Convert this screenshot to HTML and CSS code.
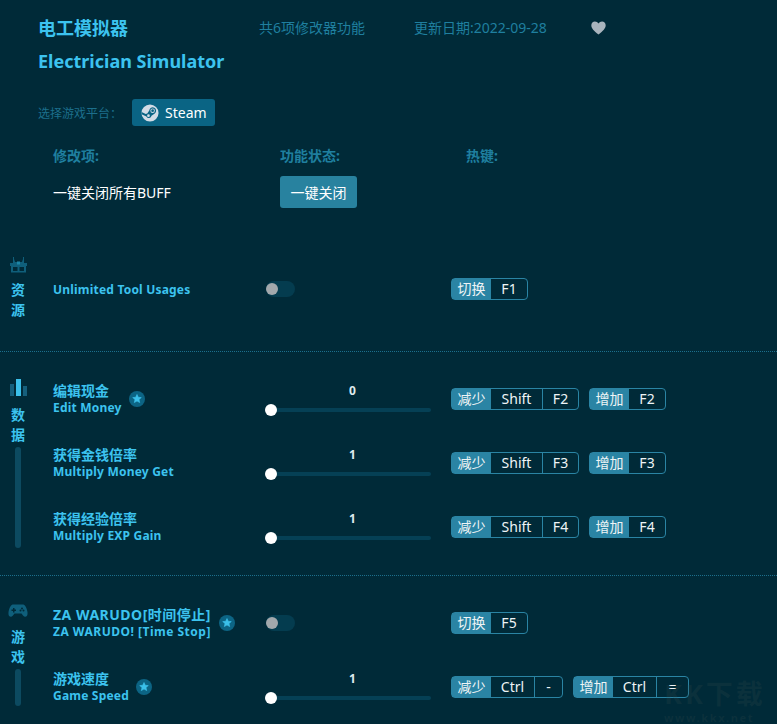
FILE: index.html
```html
<!DOCTYPE html>
<html lang="zh-CN">
<head>
<meta charset="utf-8">
<title>电工模拟器</title>
<link rel="stylesheet" href="styles.css">
</head>
<body>
<div class="page">
  <header class="header">
    <div class="title-row">
      <h1 class="title">电工模拟器</h1>
      <span class="meta meta-count">共6项修改器功能</span>
      <span class="meta meta-date">更新日期:2022-09-28</span>
      <svg class="heart" viewBox="0 0 16 15" width="15" height="14"><path d="M8 14.5C3 10.5.3 8 .3 4.6.3 2.2 2.1.5 4.2.5 5.7.5 7.2 1.3 8 2.700 8.800 1.300 10.300.5 11.800.5 13.900.5 15.700 2.200 15.700 4.600 15.700 8 13 10.500 8 14.500Z" fill="#a9b4bd"/></svg>
    </div>
    <div class="subtitle">Electrician Simulator</div>
    <div class="platform-row">
      <span class="platform-label">选择游戏平台：</span>
      <span class="steam-btn">
        <svg class="steam-icon" viewBox="0 0 20 20" width="18" height="18">
          <circle cx="10" cy="10" r="9.500" fill="#d3dce6"/>
          <path d="M.6 11.500 6 13.800A3 3 0 0 0 11.700 13L15.300 10.500A3.800 3.800 0 1 0 9.200 7.300L7 10.600A3 3 0 0 0 5.300 11L.6 9Z" fill="#0a6484"/>
          <circle cx="12.900" cy="7.400" r="2.500" fill="#d3dce6"/>
          <circle cx="12.900" cy="7.400" r="1.500" fill="#0a6484"/>
          <circle cx="8.300" cy="13" r="1.500" fill="#d3dce6"/>
        </svg>
        Steam
      </span>
    </div>
  </header>

  <div class="table-head">
    <span class="col-name">修改项:</span>
    <span class="col-state">功能状态:</span>
    <span class="col-key">热键:</span>
  </div>
  <div class="close-row">
    <span class="col-name close-text">一键关闭所有BUFF</span>
    <span class="col-state"><span class="close-btn">一键关闭</span></span>
  </div>

  <section class="section section-res">
    <aside class="side">
      <svg class="side-icon" viewBox="0 0 17 16" width="17" height="16">
        <path d="M3 0H4V2L5 5H12L13 2V0H14V6H3ZM0 6H17V9H0ZM1 9H16V15.500H1ZM3 10V14H7.500V10ZM9.500 10V14H14V10Z" fill="#0f5f7b" fill-rule="evenodd"/>
        <rect x="7" y="4.500" width="3" height="3" fill="#1c86a6"/>
      </svg>
      <div class="side-text">资<br>源</div>
    </aside>
    <div class="rows">
      <div class="row">
        <div class="name"><div class="name-en">Unlimited Tool Usages</div></div>
        <div class="control"><span class="toggle"><span class="knob"></span></span></div>
        <div class="keys">
          <span class="key"><b class="key-label">切换</b><span class="cell">F1</span></span>
        </div>
      </div>
    </div>
  </section>

  <section class="section section-data">
    <aside class="side">
      <svg class="side-icon" viewBox="0 0 17 17" width="17" height="17">
        <rect x="0" y="5" width="4" height="12" fill="#155f7c"/>
        <rect x="6" y="0" width="5" height="17" fill="#3bc0ea"/>
        <rect x="13" y="7" width="4" height="10" fill="#155f7c"/>
      </svg>
      <div class="side-text">数<br>据</div>
      <div class="side-bar bar-data"></div>
    </aside>
    <div class="rows">
      <div class="row">
        <div class="name">
          <div class="name-line">
            <div><div class="name-cn">编辑现金</div><div class="name-en">Edit Money</div></div>
            <svg class="star" viewBox="0 0 16 16" width="16" height="16"><circle cx="8" cy="8" r="8" fill="#0c6484"/><path d="M8 3.500 9.300 6.300 12.300 6.600 10 8.600 10.700 11.600 8 10 5.300 11.600 6 8.600 3.700 6.600 6.700 6.300Z" fill="#3bc0ea" stroke="#3bc0ea" stroke-linejoin="round" stroke-width=".6"/></svg>
          </div>
        </div>
        <div class="control"><div class="slider"><span class="slider-val">0</span><span class="track"><span class="thumb"></span></span></div></div>
        <div class="keys">
          <span class="key"><b class="key-label">减少</b><span class="cell cell-shift">Shift</span><span class="cell">F2</span></span>
          <span class="key"><b class="key-label">增加</b><span class="cell">F2</span></span>
        </div>
      </div>
      <div class="row">
        <div class="name"><div class="name-cn">获得金钱倍率</div><div class="name-en">Multiply Money Get</div></div>
        <div class="control"><div class="slider"><span class="slider-val">1</span><span class="track"><span class="thumb"></span></span></div></div>
        <div class="keys">
          <span class="key"><b class="key-label">减少</b><span class="cell cell-shift">Shift</span><span class="cell">F3</span></span>
          <span class="key"><b class="key-label">增加</b><span class="cell">F3</span></span>
        </div>
      </div>
      <div class="row">
        <div class="name"><div class="name-cn">获得经验倍率</div><div class="name-en">Multiply EXP Gain</div></div>
        <div class="control"><div class="slider"><span class="slider-val">1</span><span class="track"><span class="thumb"></span></span></div></div>
        <div class="keys">
          <span class="key"><b class="key-label">减少</b><span class="cell cell-shift">Shift</span><span class="cell">F4</span></span>
          <span class="key"><b class="key-label">增加</b><span class="cell">F4</span></span>
        </div>
      </div>
    </div>
  </section>

  <section class="section section-game">
    <aside class="side">
      <svg class="side-icon" viewBox="0 0 20 15" width="20" height="15">
        <path d="M5.500 1.500H14.500C17 1.500 18.500 4 19.500 9 20 12.500 18.500 14 16.800 13.800 15.500 13.600 14.500 11.500 13.500 10.500H6.500C5.500 11.500 4.500 13.600 3.200 13.800 1.500 14 0 12.500.5 9 1.500 4 3 1.500 5.500 1.500Z" fill="#0f5f7b"/>
        <path d="M5 5H6.500V6.500H8V8H6.500V9.500H5V8H3.500V6.500H5Z" fill="#002a38"/>
        <circle cx="14" cy="5.500" r="1" fill="#002a38"/><circle cx="12.500" cy="7.500" r="1" fill="#002a38"/><circle cx="15.500" cy="7.500" r="1" fill="#002a38"/>
      </svg>
      <div class="side-text">游<br>戏</div>
      <div class="side-bar bar-game"></div>
    </aside>
    <div class="rows">
      <div class="row">
        <div class="name">
          <div class="name-line">
            <div class="name-wide"><div class="name-cn">ZA WARUDO[时间停止]</div><div class="name-en">ZA WARUDO! [Time Stop]</div></div>
            <svg class="star" viewBox="0 0 16 16" width="16" height="16"><circle cx="8" cy="8" r="8" fill="#0c6484"/><path d="M8 3.500 9.300 6.300 12.300 6.600 10 8.600 10.700 11.600 8 10 5.300 11.600 6 8.600 3.700 6.600 6.700 6.300Z" fill="#3bc0ea" stroke="#3bc0ea" stroke-linejoin="round" stroke-width=".6"/></svg>
          </div>
        </div>
        <div class="control"><span class="toggle"><span class="knob"></span></span></div>
        <div class="keys">
          <span class="key"><b class="key-label">切换</b><span class="cell">F5</span></span>
        </div>
      </div>
      <div class="row">
        <div class="name">
          <div class="name-line">
            <div><div class="name-cn">游戏速度</div><div class="name-en">Game Speed</div></div>
            <svg class="star" viewBox="0 0 16 16" width="16" height="16"><circle cx="8" cy="8" r="8" fill="#0c6484"/><path d="M8 3.500 9.300 6.300 12.300 6.600 10 8.600 10.700 11.600 8 10 5.300 11.600 6 8.600 3.700 6.600 6.700 6.300Z" fill="#3bc0ea" stroke="#3bc0ea" stroke-linejoin="round" stroke-width=".6"/></svg>
          </div>
        </div>
        <div class="control"><div class="slider"><span class="slider-val">1</span><span class="track"><span class="thumb"></span></span></div></div>
        <div class="keys">
          <span class="key"><b class="key-label">减少</b><span class="cell cell-ctrl">Ctrl</span><span class="cell cell-minus">-</span></span>
          <span class="key"><b class="key-label">增加</b><span class="cell cell-ctrl">Ctrl</span><span class="cell cell-eq">=</span></span>
        </div>
      </div>
    </div>
  </section>

  <div class="watermark">
    <div class="wm-big">KK下载</div>
    <div class="wm-small">www.kkx.net</div>
  </div>
</div>
</body>
</html>
```
FILE: styles.css
```css
* { box-sizing: border-box; }
html, body { margin: 0; padding: 0; }
body {
  background: #002a38;
  font-family: "Noto Sans", "Noto Sans CJK SC", sans-serif;
  color: #fff;
  overflow: hidden;
}
.page { position: relative; width: 777px; height: 724px; overflow: hidden; }

.header { padding: 16px 0 0 38px; }
.title-row { display: flex; align-items: center; height: 24px; }
.title { margin: 0; width: 221px; font-size: 18px; font-weight: 700; color: #3cc3ef; line-height: 24px; }
.meta { font-size: 14px; color: #1f7f9f; line-height: 24px; }
.meta-count { width: 155px; }
.meta-date { width: 177px; }
.heart { display: block; }
.subtitle { margin-top: 9px; font-size: 18px; font-weight: 700; color: #3cc3ef; line-height: 24px; }
.platform-row { display: flex; align-items: center; margin-top: 26px; height: 27px; }
.platform-label { width: 94px; font-size: 12px; color: #1c6f8c; }
.steam-btn {
  display: flex; align-items: center; gap: 6px;
  width: 83px; height: 27px; padding-left: 9px;
  background: #0a6484; border-radius: 3px;
  font-size: 14px; color: #fff;
}

.table-head { display: flex; margin-top: 19px; height: 20px; align-items: center; font-size: 14px; font-weight: 700; color: #1f7f9f; }
.col-name { width: 227px; margin-left: 53px; }
.col-state { width: 185px; }
.col-key { margin-left: 1px; }
.close-row { display: flex; align-items: center; margin-top: 11px; height: 32px; }
.close-text { font-size: 14px; }
.close-btn {
  display: inline-flex; align-items: center; justify-content: center;
  width: 77px; height: 32px; background: #28829f; border-radius: 3px; font-size: 14px;
}

.section { display: flex; }
.section-res { margin-top: 21px; height: 123px; padding-top: 28px; border-bottom: 1px dotted #1c6f8c; }
.section-data { height: 224px; padding-top: 15px; border-bottom: 1px dotted #1c6f8c; }
.section-game { padding-top: 15px; }

.side { width: 53px; padding-right: 17px; flex: none; display: flex; flex-direction: column; align-items: center; }
.section-data .side { padding-top: 12px; }
.section-game .side { padding-top: 12px; }
.side-icon { display: block; flex: none; }
.side-text { margin-top: 9px; font-size: 14px; font-weight: 700; line-height: 20px; text-align: center; color: #3cc3ef; }
.section-res .side-text { margin-top: 7px; }
.side-bar { width: 6px; margin-top: 2px; background: #0c4a60; border-radius: 3px; flex: none; }
.bar-data { height: 101px; }
.bar-game { height: 37px; }

.rows { flex: 1; }
.row { display: flex; align-items: center; height: 64px; }
.name { width: 212px; flex: none; }
.name-line { display: flex; align-items: center; gap: 7px; }
.name-wide { letter-spacing: .5px; margin-right: 1px; }
.name-cn { font-size: 14px; font-weight: 700; line-height: 17px; color: #3cc3ef; }
.name-en { font-size: 12px; font-weight: 700; line-height: 17px; letter-spacing: .2px; color: #3cc3ef; }
.name-wide .name-en { letter-spacing: .5px; }
.star { display: block; flex: none; }

.control { width: 186px; flex: none; }
.toggle { display: block; width: 29px; height: 16px; margin-left: 1px; background: #043c4f; border-radius: 8px; position: relative; }
.knob { position: absolute; left: 0; top: 2px; width: 12px; height: 12px; border-radius: 50%; background: #a2a8ac; }
.slider { width: 166px; display: flex; flex-direction: column; align-items: center; }
.slider-val { font-size: 12px; font-weight: 700; line-height: 16px; margin-left: 9px; color: #dfeaee; }
.track { display: block; position: relative; width: 160px; height: 4px; margin: 9px 0 4px 6px; background: #054055; border-radius: 2px; }
.thumb { position: absolute; left: -6px; top: -4px; width: 12px; height: 12px; border-radius: 50%; background: #fff; }

.keys { display: flex; gap: 10px; }
.key { display: flex; height: 22px; border: 1px solid #2a84a4; border-radius: 4px; font-size: 14px; line-height: 20px; color: #eef4f6; }
.key-label { width: 39px; font-weight: 400; text-align: center; background: #2a84a4; }
.cell { min-width: 36px; text-align: center; }
.cell + .cell { border-left: 1px solid #2a84a4; }
.cell-shift { width: 52px; min-width: 51px; flex: none; width: 51px; }
.cell-ctrl { width: 43px; min-width: 43px; }
.cell-minus { min-width: 28px; width: 28px; }
.cell-eq { min-width: 32px; width: 32px; }

.watermark { position: absolute; left: 664px; top: 680px; pointer-events: none; color: rgba(60, 80, 80, .2); font-weight: 700; white-space: nowrap; }
.wm-big { font-size: 27px; line-height: 28px; letter-spacing: 3px; }
.wm-small { margin-top: 4px; font-size: 11px; line-height: 12px; letter-spacing: 1.600px; }
```
